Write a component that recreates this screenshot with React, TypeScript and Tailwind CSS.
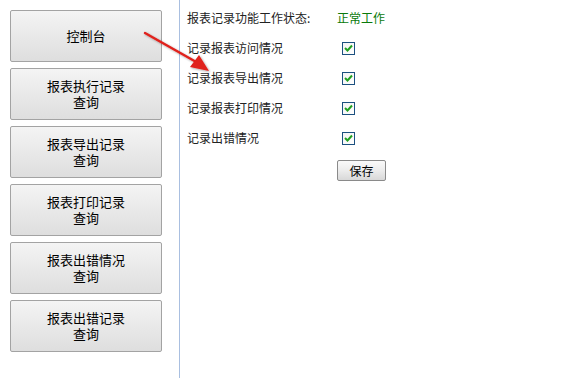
import React from "react";

const font = { fontFamily: '"Noto Sans CJK SC", "Noto Sans", sans-serif' };

const navItems: string[][] = [
  ["控制台"],
  ["报表执行记录", "查询"],
  ["报表导出记录", "查询"],
  ["报表打印记录", "查询"],
  ["报表出错情况", "查询"],
  ["报表出错记录", "查询"],
];

const rows = ["记录报表访问情况", "记录报表导出情况", "记录报表打印情况", "记录出错情况"];

function Check() {
  return (
    <div className="w-[13px] h-[13px] border border-[#1c5180] bg-gradient-to-br from-[#f4f4f4] to-white flex items-center justify-center">
      <svg width="9" height="8" viewBox="0 0 9 8">
        <path d="M1 4 L3.5 6.5 L8 1.5" stroke="#21a121" strokeWidth="2" fill="none" />
      </svg>
    </div>
  );
}

export default function App() {
  return (
    <div className="relative w-[584px] h-[378px] bg-white flex text-[#222]" style={font}>
      <div className="w-[179px] flex flex-col gap-[6px] pl-[10px] pt-[10px]">
        {navItems.map((lines, i) => (
          <div
            key={i}
            className="w-[152px] h-[52px] rounded-[2px] border border-[#a3a3a3] bg-gradient-to-b from-[#f4f4f4] to-[#dedede] flex flex-col items-center justify-center text-[13px] leading-[16px] text-black"
          >
            {lines.map((l, j) => (
              <span key={j} className="block h-[16px]">{l}</span>
            ))}
          </div>
        ))}
      </div>
      <div className="w-px h-full bg-[#a9bfe0]" />
      <div className="pl-[7px] pt-[3px] flex flex-col text-[12px]">
        <div className="h-[30px] flex items-center">
          <span className="w-[150px]">报表记录功能工作状态:</span>
          <span className="text-[#0a7a0a]">正常工作</span>
        </div>
        {rows.map((r) => (
          <div key={r} className="h-[30px] flex items-center">
            <span className="w-[155px]">{r}</span>
            <Check />
          </div>
        ))}
        <div className="pl-[150px] mt-[7px]">
          <button className="w-[49px] h-[21px] rounded-[2px] border border-[#8a8a8a] bg-gradient-to-b from-[#fafafa] via-[#ececec] to-[#d8d8d8] text-[12px] text-black leading-none flex items-center justify-center">
            保存
          </button>
        </div>
      </div>
      <svg className="absolute left-0 top-0 pointer-events-none" width="584" height="378">
        <defs>
          <filter id="sh" x="-20%" y="-20%" width="140%" height="140%">
            <feDropShadow dx="1" dy="1" stdDeviation="1" floodColor="#000" floodOpacity="0.35" />
          </filter>
        </defs>
        <g filter="url(#sh)">
          <line x1="145" y1="33" x2="198" y2="63" stroke="#e0201b" strokeWidth="2.4" strokeLinecap="round" />
          <polygon points="209,71 190,67 199,55" fill="#e0201b" />
        </g>
      </svg>
    </div>
  );
}
